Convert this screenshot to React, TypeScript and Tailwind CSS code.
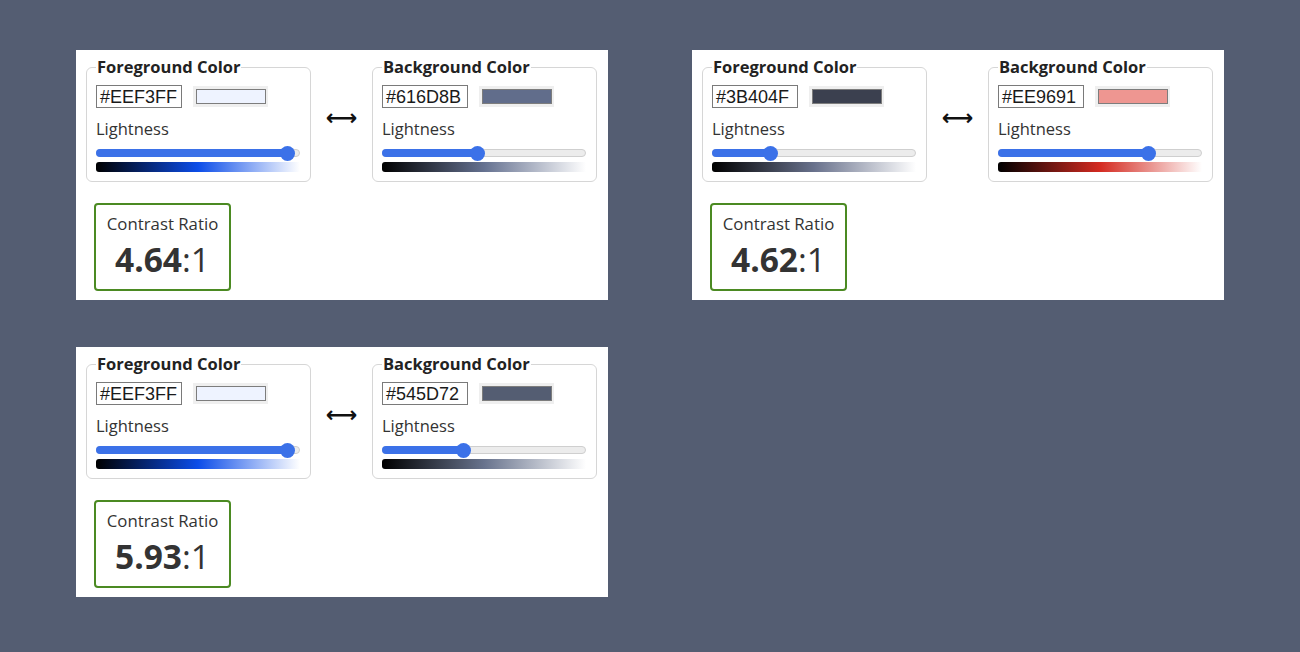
type Pair = { fg: string; bg: string; ratio: string }

const pairs: Pair[] = [
  { fg: '#EEF3FF', bg: '#616D8B', ratio: '4.64' },
  { fg: '#3B404F', bg: '#EE9691', ratio: '4.62' },
  { fg: '#EEF3FF', bg: '#545D72', ratio: '5.93' },
]

function toHsl(hex: string) {
  const n = parseInt(hex.slice(1), 16)
  const r = ((n >> 16) & 255) / 255
  const g = ((n >> 8) & 255) / 255
  const b = (n & 255) / 255
  const max = Math.max(r, g, b)
  const min = Math.min(r, g, b)
  const l = (max + min) / 2
  let h = 0
  let s = 0
  if (max !== min) {
    const d = max - min
    s = l > 0.5 ? d / (2 - max - min) : d / (max + min)
    if (max === r) h = (g - b) / d + (g < b ? 6 : 0)
    else if (max === g) h = (b - r) / d + 2
    else h = (r - g) / d + 4
    h *= 60
  }
  return { h, s: s * 100, l }
}

function ColorField({ label, hex }: { label: string; hex: string }) {
  const { h, s, l } = toHsl(hex)
  // thumb travels 190px across a 204px track
  const thumbLeft = Math.round(l * 190)
  const sat = Math.min(s, 90)
  const ramp = `linear-gradient(to right, hsl(${h} ${sat}% 0%), hsl(${h} ${sat}% 48%), hsl(${h} ${sat}% 100%))`

  return (
    <fieldset className="w-[225px] rounded-[6px] border border-[#d6d6d6] px-[9px] pb-[9px] pt-[8px]">
      <legend className="px-[1px] text-[16.5px] font-bold leading-[20px] text-[#222]">{label}</legend>
      <div className="flex items-center">
        <div className="flex h-[23px] w-[86px] items-center border border-[#7a7a7a] pl-[3px] font-['Liberation_Sans',Arial,sans-serif] text-[18px] leading-[20px] text-[#1a1a1a]">
          {hex}
        </div>
        <div className="ml-[11px] h-[21px] w-[75px] bg-[#efefef] pb-[3px] pl-[3px] pr-[2px] pt-[3px]">
          <div className="h-full w-full border border-[#7d7d7d]" style={{ backgroundColor: hex }} />
        </div>
      </div>
      <p className="mt-[9px] text-[16.5px] leading-[24px] text-[#333]">Lightness</p>
      <div className="relative mt-[4px] h-[16px] w-[204px]">
        <div className="absolute left-0 right-0 top-[4px] h-[8px] rounded-full border border-[#cfcfcf] bg-[#ececec]" />
        <div
          className="absolute left-0 top-[4px] h-[8px] rounded-full bg-[#3b71e8]"
          style={{ width: thumbLeft + 8 }}
        />
        <div
          className="absolute top-[0.5px] h-[15px] w-[15px] rounded-full bg-[#3b71e8]"
          style={{ left: thumbLeft }}
        />
      </div>
      <div className="mt-[1px] h-[10px] w-[204px] rounded-l-[3px]" style={{ backgroundImage: ramp }} />
    </fieldset>
  )
}

function ContrastPanel({ pair }: { pair: Pair }) {
  return (
    <section className="h-[250px] bg-white pl-[10px] pr-[11px] pt-[7px]">
      <div className="flex items-start">
        <ColorField label="Foreground Color" hex={pair.fg} />
        <div className="flex flex-1 justify-center pt-[46px] font-['DejaVu_Sans',sans-serif] text-[22px] font-bold leading-[30px] text-[#111]">
          ⟷
        </div>
        <ColorField label="Background Color" hex={pair.bg} />
      </div>
      <div className="ml-[8px] mt-[21px] flex h-[88px] w-[137px] flex-col items-center rounded-[4px] border-2 border-[#4b8a22] pt-[7px] text-[#333]">
        <p className="text-[16.8px] leading-[24px]">Contrast Ratio</p>
        <p className="mt-[4px] text-[33.5px] leading-[38px]">
          <span className="font-bold">{pair.ratio}</span>:1
        </p>
      </div>
    </section>
  )
}

export default function App() {
  return (
    <main className="min-h-[652px] bg-[#545d72] pl-[76px] pt-[50px] font-['Open_Sans',sans-serif]">
      <div className="grid grid-cols-[532px_532px] gap-x-[84px] gap-y-[47px]">
        {pairs.map((pair, i) => (
          <ContrastPanel key={i} pair={pair} />
        ))}
      </div>
    </main>
  )
}
